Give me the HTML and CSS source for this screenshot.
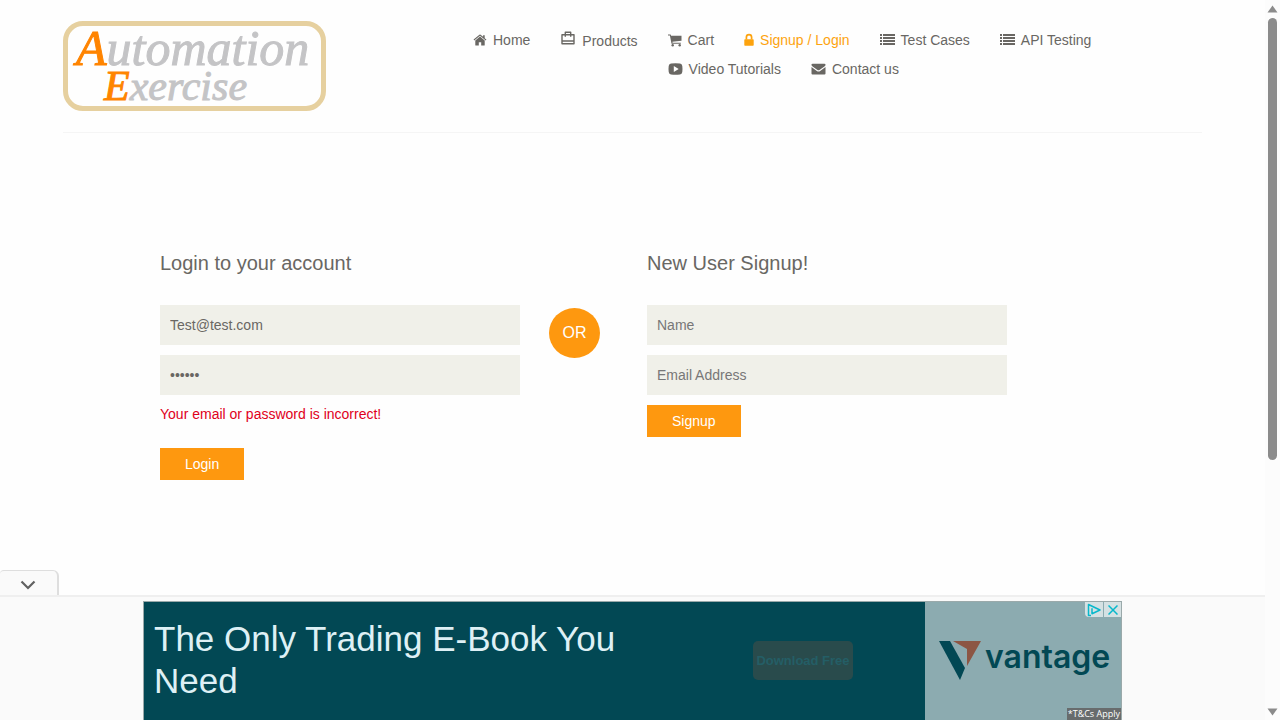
FILE: index.html
```html
<!DOCTYPE html>
<html lang="en">
<head>
<meta charset="utf-8">
<meta name="viewport" content="width=device-width, initial-scale=1">
<title>Automation Exercise - Signup / Login</title>
<link rel="stylesheet" href="styles.css">
</head>
<body>
<div class="page">
  <header class="container site-header">
    <a class="logo" href="#">
      <span class="logo-line"><span class="logo-cap">A</span>utomation</span>
      <span class="logo-line logo-second"><span class="logo-cap">E</span>xercise</span>
    </a>
    <nav>
      <ul class="menu">
        <li><a href="#"><svg class="icon" width="14" height="14" viewBox="0 0 14 14"><path d="M7 3.600 2.300 7.500V12a.5.5 0 0 0 .5.5h3V9.200h2.400v3.300h3a.5.5 0 0 0 .5-.5V7.500z"/><path d="M13.400 6.600 11.700 5.200V2.200h-1.600v1.600L7.600 1.700a1 1 0 0 0-1.200 0L.6 6.600l.6.8L7 2.800l5.800 4.600z"/></svg>Home</a></li>
        <li class="menu-tall"><a href="#"><svg class="icon bag" width="16" height="16" viewBox="0 0 16 16"><path fill="none" stroke="currentColor" stroke-width="1.400" stroke-linejoin="round" d="M2 4.700h12v9.100H2zM5.300 4.700V2.200h5.400v2.500M2 11h12M5.300 4.700v2M10.700 4.700v2"/></svg>Products</a></li>
        <li><a href="#"><svg class="icon" width="14" height="14" viewBox="0 0 14 14"><path d="M0 1.500h2.600l.5 1.200h10.400v5L4.400 8.800l.2 1h8.200v1H3.500L1.900 2.600H0z"/><circle cx="4.700" cy="12.200" r="1.200"/><circle cx="11.700" cy="12.200" r="1.200"/></svg>Cart</a></li>
        <li><a class="active" href="#"><svg class="icon" width="10" height="14" viewBox="0 0 10 14"><path d="M1 6.300h8a.7.7 0 0 1 .7.7v5a.7.7 0 0 1-.7.7H1a.7.7 0 0 1-.7-.7V7a.7.7 0 0 1 .7-.7z"/><path fill="none" stroke="currentColor" stroke-width="1.700" d="M2.400 6.500V4.300a2.600 2.600 0 0 1 5.200 0v2.200"/></svg>Signup / Login</a></li>
        <li><a href="#"><svg class="icon" width="15" height="14" viewBox="0 0 15 14"><path d="M0 1h2v2H0zM3 1h12v2H3zM0 4h2v2H0zM3 4h12v2H3zM0 7h2v2H0zM3 7h12v2H3zM0 10h2v2H0zM3 10h12v2H3z"/></svg>Test Cases</a></li>
        <li><a href="#"><svg class="icon" width="15" height="14" viewBox="0 0 15 14"><path d="M0 1h2v2H0zM3 1h12v2H3zM0 4h2v2H0zM3 4h12v2H3zM0 7h2v2H0zM3 7h12v2H3zM0 10h2v2H0zM3 10h12v2H3z"/></svg>API Testing</a></li>
        <li><a href="#"><svg class="icon" width="15" height="14" viewBox="0 0 14 14"><path fill-rule="evenodd" d="M2.500 1.500Q7 1.100 11.500 1.500Q13.500 1.700 13.800 4Q14.200 7 13.800 10Q13.500 12.300 11.500 12.500Q7 12.900 2.500 12.500Q.5 12.300.2 10Q-.2 7 .2 4Q.5 1.700 2.500 1.500zM5.300 4v6L10.200 7z"/></svg>Video Tutorials</a></li>
        <li><a href="#"><svg class="icon" width="15" height="14" viewBox="0 0 14 14"><path d="M0 2.800Q0 1.700 1.100 1.700h11.800Q14 1.700 14 2.800 14 3.700 12.900 4.500L8 8Q7 8.700 6 8L1.100 4.500Q0 3.700 0 2.800z"/><path d="M0 5.100 5.300 8.900Q7 10 8.700 8.900L14 5.100v6.500q0 .9-1 .9H1q-1 0-1-.9z"/></svg>Contact us</a></li>
      </ul>
    </nav>
  </header>

  <main class="container forms">
    <form class="login" onsubmit="return false">
      <h2>Login to your account</h2>
      <input type="text" aria-label="Email Address" placeholder="Email Address" value="Test@test.com">
      <input type="password" aria-label="Password" placeholder="Password" value="secret">
      <p class="error">Your email or password is incorrect!</p>
      <button class="submit">Login</button>
    </form>
    <div class="or">OR</div>
    <form class="signup" onsubmit="return false">
      <h2>New User Signup!</h2>
      <input type="text" aria-label="Name" placeholder="Name">
      <input type="email" aria-label="Email Address" placeholder="Email Address">
      <button class="submit">Signup</button>
    </form>
  </main>

  <aside class="dock">
    <button class="dock-toggle" aria-label="Collapse advertisement"><svg width="16" height="10" viewBox="0 0 16 10"><path fill="none" stroke="currentColor" stroke-width="2.200" d="m1.500 1.500 6.500 6.500 6.500-6.500"/></svg></button>
    <div class="dock-body">
      <div class="ad">
        <p class="ad-title">The Only Trading E-Book You Need</p>
        <div class="ad-action"><button class="download">Download Free</button></div>
        <div class="ad-brand">
          <svg width="43" height="39" viewBox="0 0 43 39"><path fill="#024854" d="M0 0h11l15 27-5 12z"/><path fill="#8c5644" d="M14 0h28L28 25V8z"/></svg>
          <span class="ad-name">vantage</span>
          <div class="ad-choices">
            <button aria-label="Ad choices"><svg width="14" height="14" viewBox="0 0 14 14"><path fill="none" stroke="currentColor" stroke-width="1.500" stroke-linejoin="round" d="M4 12.500H1.500V1.500L13 7 5 10.700V5.200"/></svg></button>
            <button aria-label="Close ad"><svg width="10" height="10" viewBox="0 0 10 10"><path fill="none" stroke="currentColor" stroke-width="1.500" d="m.5.5 9 9m0-9-9 9"/></svg></button>
          </div>
          <small class="terms">*T&amp;Cs Apply</small>
        </div>
      </div>
    </div>
  </aside>
</div>
<div class="scrollbar" aria-hidden="true">
  <svg width="11" height="8" viewBox="0 0 11 8"><path d="M5.500.5 10.500 7.500H.5z"/></svg>
  <div class="track"><div class="thumb"></div></div>
  <svg width="11" height="8" viewBox="0 0 11 8"><path d="M.5.5h10l-5 7z"/></svg>
</div>
</body>
</html>
```

FILE: styles.css
```css
* { box-sizing: border-box; }

body {
  margin: 0;
  display: flex;
  height: 100vh;
  overflow: hidden;
  background: #fefefe;
  color: #696763;
  font: 14px/20px "Liberation Sans", Arial, sans-serif;
}

button, input { font: inherit; color: inherit; border: 0; border-radius: 0; }
button { cursor: pointer; }
h2, p, ul { margin: 0; padding: 0; }

.page {
  flex: 1;
  min-width: 0;
  display: flex;
  flex-direction: column;
}

.container {
  width: 100%;
  max-width: 1139px;
  margin: 0 auto;
}

/* Header */
.site-header {
  display: grid;
  grid-template-columns: 390px 1fr;
  padding: 21px 0;
  border-bottom: 1px solid #f5f5f5;
}

.logo {
  justify-self: start;
  width: 263px;
  height: 90px;
  padding-left: 8px;
  border: 5px solid #e6d09f;
  border-radius: 20px;
  color: #c4c4c6;
  text-decoration: none;
  font: italic 50px/44px "Liberation Serif", "Times New Roman", serif;
  -webkit-text-stroke: 1px currentColor;
}

.logo-line { display: block; white-space: nowrap; }
.logo-second { padding-left: 28px; line-height: 32px; font-size: 42px; }
.logo-cap { color: #ff8400; }

.menu {
  list-style: none;
  padding: 9px 0 0 20px;
}

.menu li { float: left; height: 29px; padding-right: 30px; }
.menu .menu-tall { height: 31px; }

.menu a {
  display: flex;
  align-items: center;
  gap: 6px;
  color: inherit;
  text-decoration: none;
  white-space: nowrap;
}

.menu .active { color: #fda30e; }
.icon { fill: currentColor; }
.bag { margin-bottom: 6px; }

/* Login and signup forms */
.forms {
  flex: 1;
  min-height: 0;
  display: grid;
  grid-template-columns: 360px 51px 360px;
  column-gap: 29px;
  align-content: start;
  align-items: start;
  justify-content: start;
  padding: 118px 0 0 97px;
}

.forms h2 {
  margin-bottom: 30px;
  font-size: 20px;
  font-weight: 400;
  line-height: 24px;
}

.forms input {
  display: block;
  width: 100%;
  height: 40px;
  margin-bottom: 10px;
  padding: 0 10px;
  background: #f0f0e9;
  outline: 0;
}

.forms input::placeholder { color: #777; opacity: 1; }
.signup { margin-left: 18px; width: 360px; }
.error { margin-bottom: 24px; color: #e0001b; line-height: 19px; }

.submit {
  display: block;
  height: 32px;
  padding: 0 25px;
  background: #fe980f;
  color: #fff;
}

.or {
  height: 50px;
  margin-top: 57px;
  border-radius: 50%;
  background: #fe980f;
  color: #fff;
  font-size: 16px;
  line-height: 50px;
  text-align: center;
}

/* Docked advertisement */
.dock-toggle {
  display: grid;
  place-items: center;
  width: 59px;
  height: 25px;
  padding: 3px 2px 0 0;
  background: #fafafa;
  border: solid #dedede;
  border-width: 1px 2px 0 0;
  border-radius: 4px 6px 0 0;
  color: #616161;
}

.dock-body {
  padding-top: 4px;
  border-top: 2px solid #efefef;
  background: #fafafa;
}

.ad {
  display: grid;
  grid-template-columns: 1fr 172px 196px;
  width: 979px;
  max-width: 100%;
  height: 119px;
  margin: 0 auto;
  border: solid #9aa9aa;
  border-width: 1px 1px 0;
  background: #024854;
}

.ad-title {
  max-width: 500px;
  padding: 16px 0 0 10px;
  color: #def0f5;
  font-size: 35px;
  line-height: 42px;
}

.ad-action { padding-top: 39px; }

.download {
  width: 100px;
  height: 39px;
  padding: 0;
  border-radius: 5px;
  background: #294b4c;
  color: #245e66;
  font-size: 13px;
  font-weight: 700;
}

.ad-brand {
  position: relative;
  display: flex;
  gap: 3px;
  padding: 39px 0 0 14px;
  background: #8cabb0;
}

.ad-name {
  color: #024854;
  font: 600 32px/32px Inter, sans-serif;
}

.ad-choices {
  position: absolute;
  top: 0;
  right: 0;
  display: flex;
  gap: 1px;
  height: 15px;
}

.ad-choices button {
  display: grid;
  place-items: center;
  width: 17px;
  padding: 0;
  background: #d5e1e3;
  color: #08b8cb;
}

.ad-choices button:first-child { width: 18px; border-bottom-left-radius: 4px; }

.terms {
  position: absolute;
  right: 0;
  bottom: 0;
  padding: 0 1px;
  background: #686c6d;
  color: #fff;
  font: 9px/12px "Open Sans", sans-serif;
}

/* Page scrollbar */
.scrollbar {
  display: flex;
  flex-direction: column;
  align-items: center;
  width: 15px;
  padding: 5px 0 4px;
  background: #fcfcfc;
  fill: #8b8b8b;
}

.track { flex: 1; padding-top: 5px; }
.thumb { width: 9px; height: 64%; border-radius: 5px; background: #8b8b8b; }
```
